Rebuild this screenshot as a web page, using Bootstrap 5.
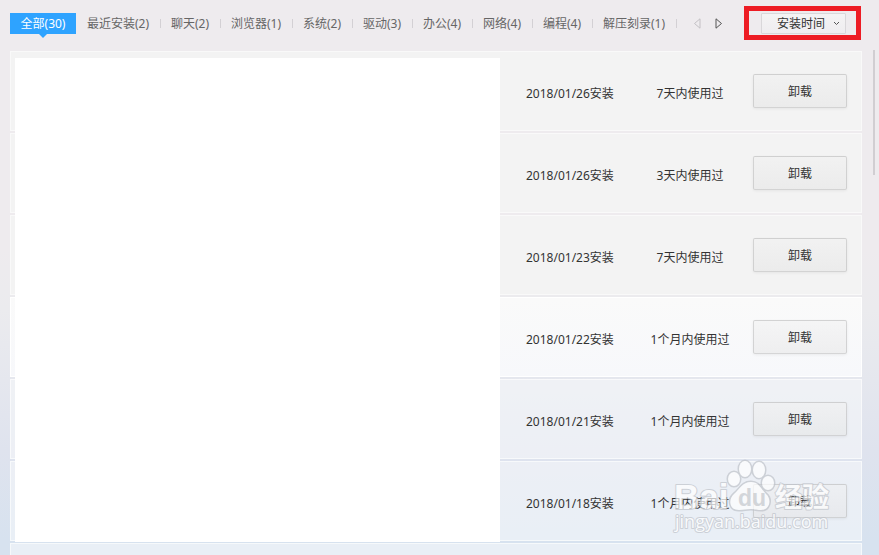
<!DOCTYPE html>
<html lang="zh-CN">
<head>
<meta charset="utf-8">
<meta name="viewport" content="width=device-width, initial-scale=1">
<title>软件卸载</title>
<link rel="stylesheet" href="https://cdn.jsdelivr.net/npm/bootstrap@5.3.0/dist/css/bootstrap.min.css">
<style>
  body {
    min-height: 100vh;
    font: 12px/20px "Noto Sans", "Noto Sans CJK SC", sans-serif;
    color: #333;
    background: linear-gradient(#eeebee 0, #eeebee 250px, #ebebee 310px, #dfe3ee 450px, #d7e2ef 540px) no-repeat #d7e2ef;
  }
  .toolbar { height: 51px; padding: 6px 18px 0 10px; }
  .cat { height: 21px; margin-top: 7px; position: relative; }
  .cat::after { content: ""; position: absolute; right: -1px; top: 6px; height: 9px; border-right: 1px solid #d3d0d4; }
  .cat button { width: 100%; height: 21px; padding: 0; border: 0; background: none; color: #666; line-height: 21px; white-space: nowrap; }
  .cat-2 { width: 60px; }
  .cat-3 { width: 72px; }
  .cat-4 { width: 84px; }
  .cat-all { width: 66px; }
  .cat-all::after { top: 21px; right: 29px; width: 0; height: 0; border: 4px solid transparent; border-top-color: #2ea3ff; border-bottom: 0; }
  .cat-all button { background: #2ea3ff; color: #fff; }
  .pager { margin: 7px 0 0 11px; }
  .pager button { width: 21px; height: 21px; padding: 0; border: 0; background: none; line-height: 0; }
  .sort-frame { border: 5px solid #ed1c24; padding: 2px 10px 0 12px; height: 34px; }
  .sort-box { position: relative; }
  .sort-box select {
    appearance: none; display: block; width: 85px; height: 21px; padding: 0 0 0 15px;
    border: 1px solid #d9d7da; border-radius: 1px; color: #333; line-height: 19px;
    background: linear-gradient(#f4f3f4, #efedf0);
  }
  .sort-box svg { position: absolute; right: 6px; top: 8px; pointer-events: none; }
  .software { margin: 0 17px 0 10px; height: calc(100vh - 51px); overflow: hidden; }
  .software ul { gap: 2px; }
  .software li {
    height: 80px; flex: none; padding-right: 14px;
    border: 1px solid rgba(255,255,255,.6); background: rgba(248,249,252,.55);
  }
  .software li:nth-child(-n+3) { background: #f3f3f3; border-color: #f9f9f9; }
  .software li.active-row { background: linear-gradient(#fafafa, #f7f8fb); border-color: #fff; }
  .date { width: 92px; margin-right: 18px; padding-top: 5px; }
  .usage { width: 108px; margin-right: 9px; padding-top: 5px; text-align: center; }
  .btn-uninstall {
    width: 94px; height: 34px; padding: 2px 0 0; font-size: 12px; line-height: 30px; color: #333;
    border: 1px solid rgba(155,155,155,.35); border-radius: 2px;
    background: linear-gradient(rgba(240,240,240,.5), rgba(228,228,228,.5));
    box-shadow: 0 1px 3px rgba(0,0,0,.06);
  }
  .cover { position: absolute; left: 5px; top: 7px; bottom: 13px; right: 362px; background: #fff; }
  .logo-mark { position: absolute; right: 42px; bottom: 16px; pointer-events: none; }
  .scroll-thumb { position: absolute; right: 4px; top: 50px; width: 2px; height: 125px; background: #d1ced2; }
</style>
<script src="https://cdn.jsdelivr.net/npm/bootstrap@5.3.0/dist/js/bootstrap.bundle.min.js"></script>
</head>
<body class="position-relative overflow-hidden">
<header class="toolbar d-flex align-items-start">
  <ul class="d-flex list-unstyled mb-0">
    <li class="cat cat-all"><button type="button">全部(30)</button></li>
    <li class="cat cat-4"><button type="button">最近安装(2)</button></li>
    <li class="cat cat-2"><button type="button">聊天(2)</button></li>
    <li class="cat cat-3"><button type="button">浏览器(1)</button></li>
    <li class="cat cat-2"><button type="button">系统(2)</button></li>
    <li class="cat cat-2"><button type="button">驱动(3)</button></li>
    <li class="cat cat-2"><button type="button">办公(4)</button></li>
    <li class="cat cat-2"><button type="button">网络(4)</button></li>
    <li class="cat cat-2"><button type="button">编程(4)</button></li>
    <li class="cat cat-4"><button type="button">解压刻录(1)</button></li>
  </ul>
  <div class="pager d-flex">
    <button type="button" aria-label="上一页" disabled><svg width="9" height="11" viewBox="0 0 9 11"><path d="M7 .8 1.5 5.5 7 10.200z" fill="none" stroke="#c3c0c4"/></svg></button>
    <button type="button" aria-label="下一页"><svg width="9" height="11" viewBox="0 0 9 11"><path d="M2 .8 7.500 5.500 2 10.200z" fill="none" stroke="#555"/></svg></button>
  </div>
  <div class="sort-frame ms-auto">
    <div class="sort-box">
      <select aria-label="排序方式"><option>安装时间</option></select>
      <svg width="7" height="5" viewBox="0 0 7 5"><path d="M1 1 3.500 3.500 6 1" fill="none" stroke="#555"/></svg>
    </div>
  </div>
</header>
<main class="software position-relative">
  <ul class="list-unstyled d-flex flex-column mb-0">
    <li class="d-flex align-items-center justify-content-end"><span class="date">2018/01/26安装</span><span class="usage">7天内使用过</span><button type="button" class="btn btn-uninstall">卸载</button></li>
    <li class="d-flex align-items-center justify-content-end"><span class="date">2018/01/26安装</span><span class="usage">3天内使用过</span><button type="button" class="btn btn-uninstall">卸载</button></li>
    <li class="d-flex align-items-center justify-content-end"><span class="date">2018/01/23安装</span><span class="usage">7天内使用过</span><button type="button" class="btn btn-uninstall">卸载</button></li>
    <li class="active-row d-flex align-items-center justify-content-end"><span class="date">2018/01/22安装</span><span class="usage">1个月内使用过</span><button type="button" class="btn btn-uninstall">卸载</button></li>
    <li class="d-flex align-items-center justify-content-end"><span class="date">2018/01/21安装</span><span class="usage">1个月内使用过</span><button type="button" class="btn btn-uninstall">卸载</button></li>
    <li class="d-flex align-items-center justify-content-end"><span class="date">2018/01/18安装</span><span class="usage">1个月内使用过</span><button type="button" class="btn btn-uninstall">卸载</button></li>
    <li></li>
  </ul>
  <div class="cover"></div>
</main>
<div class="scroll-thumb"></div>
<svg class="logo-mark" width="166" height="82" viewBox="0 0 166 82" role="img" aria-label="Baidu 经验">
  <g opacity=".7" fill="#fff" stroke="#bfc3ca" stroke-width="2" stroke-linejoin="round" paint-order="stroke">
    <g font-weight="700">
      <text x="3" y="52" font-size="35" font-family="'Liberation Sans',sans-serif">Bai</text>
      <text x="104" y="50" font-size="27" font-family="'Noto Sans CJK SC',sans-serif">经验</text>
    </g>
    <g stroke-width="3">
      <ellipse cx="63" cy="22" rx="6" ry="7"/>
      <ellipse cx="74" cy="12" rx="6" ry="8"/>
      <ellipse cx="88" cy="13" rx="6" ry="8"/>
      <ellipse cx="97" cy="26" rx="6" ry="7"/>
      <path d="M80 25C88 25 90 32 95 37 101 42 99 53 90 53 84 53 83 52 80 52 75 52 73 53 68 53 58 53 57 42 63 37 69 32 71 25 80 25Z"/>
    </g>
    <text x="67" y="49" font-size="23" font-weight="700" fill="#c9ccd0" stroke="none" font-family="'Liberation Sans',sans-serif">du</text>
    <text x="4" y="71" font-size="18" font-family="'Open Sans',sans-serif">jingyan.baidu.com</text>
  </g>
</svg>
</body>
</html>
